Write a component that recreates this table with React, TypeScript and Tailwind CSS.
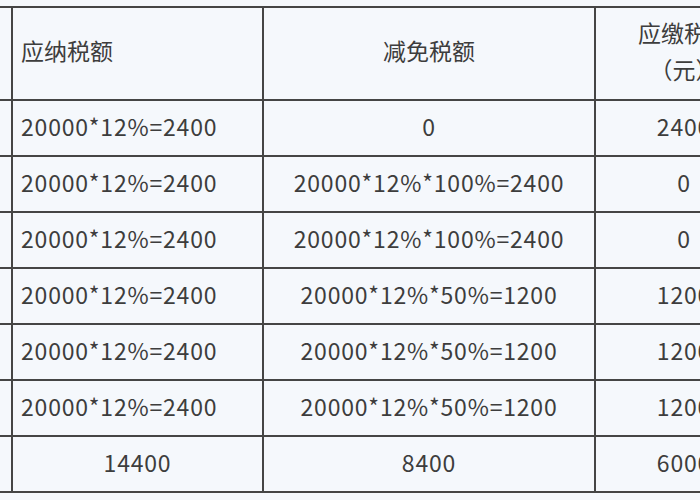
import React from 'react';

const rows: [string, string, string][] = [
  ['20000*12%=2400', '0', '2400'],
  ['20000*12%=2400', '20000*12%*100%=2400', '0'],
  ['20000*12%=2400', '20000*12%*100%=2400', '0'],
  ['20000*12%=2400', '20000*12%*50%=1200', '1200'],
  ['20000*12%=2400', '20000*12%*50%=1200', '1200'],
  ['20000*12%=2400', '20000*12%*50%=1200', '1200'],
];

const cell = 'border-2 border-[#454545] px-[8px] align-middle';
const num = 'tracking-[0.8px]';

export default function App() {
  return (
    <div
      className="w-[700px] h-[500px] overflow-hidden bg-[#f5f8fc] pt-[6px] text-[#3d3d3d] text-[23px] leading-[37px] [text-spacing-trim:space-all]"
      style={{ fontFamily: '"Noto Sans CJK SC", "Noto Sans", sans-serif' }}
    >
      <table className="ml-[-102px] border-collapse table-fixed w-[980px]">
        <colgroup>
          <col className="w-[113px]" />
          <col className="w-[251px]" />
          <col className="w-[332px]" />
          <col className="w-[178px]" />
          <col className="w-[106px]" />
        </colgroup>
        <thead>
          <tr className="h-[93px]">
            <th className={cell} />
            <th className={`${cell} text-left font-normal pb-[6px]`}>应纳税额</th>
            <th className={`${cell} text-center font-normal pb-[6px]`}>减免税额</th>
            <th className={`${cell} text-center font-normal pb-[6px]`}>
              应缴税额
              <br />
              （元）
            </th>
            <th className={cell} />
          </tr>
        </thead>
        <tbody>
          {rows.map((r, i) => (
            <tr key={i} className="h-[56px]">
              <td className={cell} />
              <td className={`${cell} ${num} text-left pb-[3px]`}>{r[0]}</td>
              <td className={`${cell} ${num} text-center pb-[3px]`}>{r[1]}</td>
              <td className={`${cell} ${num} text-center pb-[3px]`}>{r[2]}</td>
              <td className={cell} />
            </tr>
          ))}
          <tr className="h-[56px]">
            <td className={cell} />
            <td className={`${cell} ${num} text-center pb-[3px]`}>14400</td>
            <td className={`${cell} ${num} text-center pb-[3px]`}>8400</td>
            <td className={`${cell} ${num} text-center pb-[3px]`}>6000</td>
            <td className={cell} />
          </tr>
        </tbody>
      </table>
    </div>
  );
}
